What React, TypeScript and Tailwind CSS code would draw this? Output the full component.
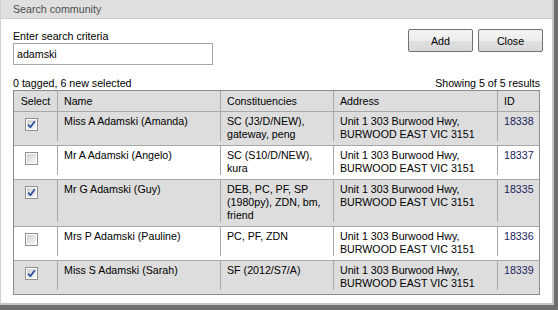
import React from "react";

type Row = {
  checked: boolean;
  name: string;
  cons: string[];
  id: string;
  gray: boolean;
};

const rows: Row[] = [
  { checked: true, name: "Miss A Adamski (Amanda)", cons: ["SC (J3/D/NEW),", "gateway, peng"], id: "18338", gray: true },
  { checked: false, name: "Mr A Adamski (Angelo)", cons: ["SC (S10/D/NEW),", "kura"], id: "18337", gray: false },
  { checked: true, name: "Mr G Adamski (Guy)", cons: ["DEB, PC, PF, SP", "(1980py), ZDN, bm,", "friend"], id: "18335", gray: true },
  { checked: false, name: "Mrs P Adamski (Pauline)", cons: ["PC, PF, ZDN"], id: "18336", gray: false },
  { checked: true, name: "Miss S Adamski (Sarah)", cons: ["SF (2012/S7/A)"], id: "18339", gray: true },
];

function Check({ checked, idx }: { checked: boolean; idx: number }) {
  const gid = `cbg${idx}`;
  return (
    <svg width="13" height="13" viewBox="0 0 13 13" className="block">
      <defs>
        <linearGradient id={gid} x1="0" y1="0" x2="1" y2="1">
          <stop offset="0" stopColor="#cfcfcf" />
          <stop offset="1" stopColor="#f8f8f8" />
        </linearGradient>
      </defs>
      <rect x="0.5" y="0.5" width="12" height="12" fill="#ffffff" stroke="#8f8f8f" />
      <rect x="2" y="2" width="9" height="9" fill={`url(#${gid})`} />
      {checked && (
        <path d="M3.2 6.6 L5.4 9.2 L9.8 3.2" fill="none" stroke="#2c4a9e" strokeWidth="1.7" strokeLinejoin="round" />
      )}
    </svg>
  );
}

const cols = "grid grid-cols-[43px_163px_113px_164px_42px]";

export default function App() {
  return (
    <div className="w-[558px] h-[310px] bg-[#6f6f6f] font-['Liberation_Sans',Arial,sans-serif] text-[10.67px] leading-[12px] text-black">
      <div className="w-[554px] h-[305px] border-r-2 border-b-2 border-[#c6c6c6] bg-white border-l border-l-[#d0d0d0] flex flex-col">
        <div className="h-[19px] bg-[#dfdfdf] border-b border-[#cdcdcd] pl-[12px] flex items-center text-[#4f4f4f] shrink-0">
          Search community
        </div>
        <div className="pl-[12px] pr-[12px] flex flex-col">
          <div className="flex justify-between items-start mt-[10px]">
            <div className="flex flex-col">
              <div className="pt-[1px]">Enter search criteria</div>
              <div className="mt-[1px] w-[200px] h-[22px] border border-[#a5a5a5] pl-[3px] flex items-center">adamski</div>
            </div>
            <div className="flex gap-[5px] mr-[-3px]">
              <button className="w-[65px] h-[23px] border border-[#707070] rounded-[2px] bg-[linear-gradient(#f4f4f4_0%,#ededed_50%,#e0e0e0_51%,#d9d9d9_100%)] text-black">
                Add
              </button>
              <button className="w-[65px] h-[23px] border border-[#707070] rounded-[2px] bg-[linear-gradient(#f4f4f4_0%,#ededed_50%,#e0e0e0_51%,#d9d9d9_100%)] text-black">
                Close
              </button>
            </div>
          </div>
          <div className="flex justify-between w-[527px] mt-[12px]">
            <span>0 tagged, 6 new selected</span>
            <span>Showing 5 of 5 results</span>
          </div>
          <div className="mt-[1px] w-[527px] border border-[#8c8c8c]">
            <div className={`${cols} h-[20px] bg-[#dddddd]`}>
              <div className="flex items-center justify-center">Select</div>
              <div className="border-l border-[#a8a8a8] pl-[6px] flex items-center">Name</div>
              <div className="border-l border-[#a8a8a8] pl-[6px] flex items-center">Constituencies</div>
              <div className="border-l border-[#a8a8a8] pl-[6px] flex items-center">Address</div>
              <div className="border-l border-[#a8a8a8] pl-[6px] flex items-center">ID</div>
            </div>
            {rows.map((r, i) => (
              <div
                key={r.id}
                className={`${cols} border-t border-[#a8a8a8] pb-[4px] leading-[13px] ${r.gray ? "bg-[#dddddd]" : "bg-white"}`}
              >
                <div className="pt-[6px] pl-[11px]">
                  <Check checked={r.checked} idx={i} />
                </div>
                <div className="border-l border-[#a8a8a8] pl-[6px] pt-[3px] whitespace-nowrap">{r.name}</div>
                <div className="border-l border-[#a8a8a8] pl-[6px] pt-[3px] whitespace-nowrap">
                  {r.cons.map((c, j) => (
                    <div key={j}>{c}</div>
                  ))}
                </div>
                <div className="border-l border-[#a8a8a8] pl-[6px] pt-[3px] whitespace-nowrap">
                  <div>Unit 1 303 Burwood Hwy,</div>
                  <div>BURWOOD EAST VIC 3151</div>
                </div>
                <div className="border-l border-[#a8a8a8] pl-[6px] pt-[3px] text-[#22225e]">{r.id}</div>
              </div>
            ))}
          </div>
        </div>
      </div>
    </div>
  );
}
